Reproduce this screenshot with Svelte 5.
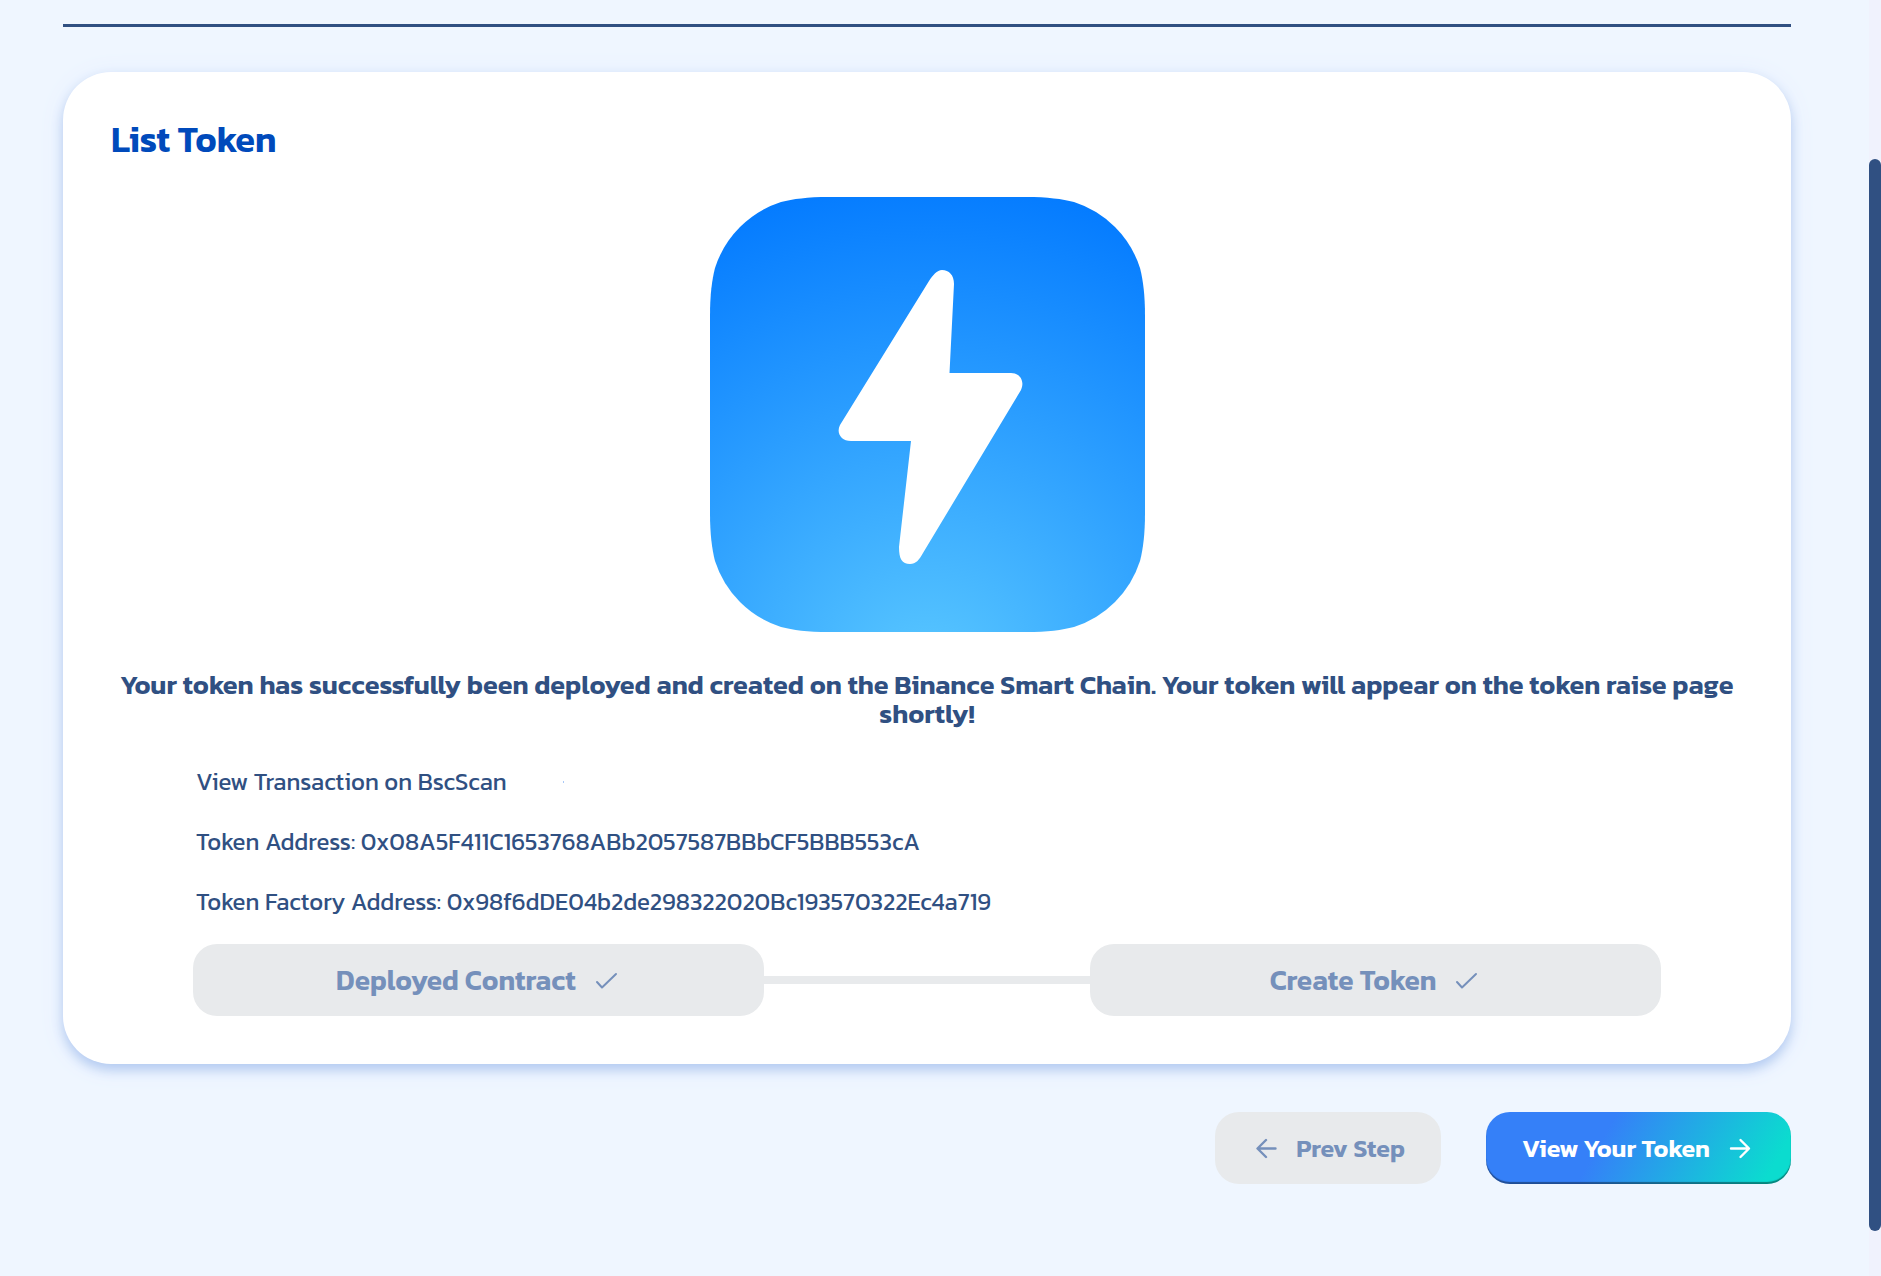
<script>
  const details = [
    { label: 'Token Address', value: '0x08A5F411C1653768ABb2057587BBbCF5BBB553cA' },
    { label: 'Token Factory Address', value: '0x98f6dDE04b2de298322020Bc193570322Ec4a719' }
  ];
</script>

{#snippet check()}
  <svg class="check" viewBox="0 0 27 27" aria-hidden="true"><path d="M3 15 8 20.500 22 7" /></svg>
{/snippet}

<div class="page">
  <main>
    <hr />
    <section class="card">
      <h1>List Token</h1>
      <svg class="logo" viewBox="0 0 435 435" role="img" aria-label="Token logo">
        <defs>
          <radialGradient id="sky" gradientUnits="userSpaceOnUse" cx="217" cy="480" r="500">
            <stop offset="0" stop-color="#5ac8ff" />
            <stop offset="1" stop-color="#047bff" />
          </radialGradient>
        </defs>
        <path
          fill="url(#sky)"
          d="M119 0H316C338 0 352 2 364 5A102 102 0 0 1 430 71C433 83 435 97 435 119V316C435 338 433 352 430 364A102 102 0 0 1 364 430C352 433 338 435 316 435H119C97 435 83 433 71 430A102 102 0 0 1 5 364C2 352 0 338 0 316V119C0 97 2 83 5 71A102 102 0 0 1 71 5C83 2 97 0 119 0Z"
        />
        <path
          fill="#fff"
          d="M244 87C244 78 239 73 232 73C227 73 223 78 219 84L130 228C126 236 131 244 141 244H201L189 350C189 362 192 367 200 367C206 367 209 363 213 356L311 193C315 184 310 176 301 176H239.500Z"
        />
      </svg>
      <p class="message">
        Your token has successfully been deployed and created on the Binance Smart Chain. Your token will appear on the
        token raise page shortly!
      </p>
      <div class="details">
        <p><a href="#transaction">View Transaction on BscScan</a><span class="dot"></span></p>
        {#each details as item}
          <p>{item.label}: {item.value}</p>
        {/each}
      </div>
      <div class="steps">
        <button class="btn muted step" type="button">Deployed Contract {@render check()}</button>
        <span class="connector"></span>
        <button class="btn muted step" type="button">Create Token {@render check()}</button>
      </div>
    </section>
    <nav>
      <button class="btn muted" type="button">
        <svg viewBox="0 0 27 27" aria-hidden="true"><path d="M24.500 13.500H7M15 5 6.500 13.500 15 22" /></svg>
        Prev Step
      </button>
      <button class="btn primary" type="button">
        View Your Token
        <svg viewBox="0 0 27 27" aria-hidden="true"><path d="M3 13.500H20.500M12.500 5 21 13.500 12.500 22" /></svg>
      </button>
    </nav>
  </main>
  <div class="rail"><div class="thumb"></div></div>
</div>

<style>
  :global(body) {
    margin: 0;
    background: #eff6ff;
  }
  .page {
    display: flex;
    min-height: 100vh;
    color: #305082;
    font-family: Kanit, 'Noto Sans', sans-serif;
  }
  main {
    flex: 1;
    min-width: 0;
    padding: 24px 78px 48px 63px;
  }
  hr {
    height: 3px;
    margin: 0 0 45px;
    border: 0;
    background: #305082;
  }
  .card {
    display: flex;
    flex-direction: column;
    padding: 48px;
    border-radius: 48px;
    background: #fff;
    box-shadow:
      0 6px 12px #b4cbf1,
      0 3px 24px #e3ecfc;
  }
  h1 {
    margin: 0 0 38px;
    color: #004abb;
    font-size: 36px;
    font-weight: 600;
    line-height: 39px;
  }
  .logo {
    align-self: center;
    width: 435px;
    max-width: 100%;
  }
  .message {
    margin: 38px 0 36px;
    font-size: 27px;
    font-weight: 600;
    line-height: 29px;
    text-align: center;
  }
  .details {
    display: grid;
    gap: 24px;
    padding: 0 85px;
    font-size: 24px;
    line-height: 36px;
  }
  .details p {
    display: flex;
    align-items: center;
    margin: 0;
    overflow-wrap: anywhere;
  }
  .details a {
    color: inherit;
    text-decoration: none;
  }
  .dot {
    width: 1px;
    height: 2px;
    margin-left: 56px;
    background: #a9c9f8;
  }
  .steps {
    display: flex;
    align-items: center;
    margin-top: 24px;
    padding: 0 82px;
  }
  .connector {
    flex: 4;
    height: 8px;
    background: #e8eaec;
  }
  .btn {
    display: flex;
    align-items: center;
    justify-content: center;
    gap: 18px;
    height: 72px;
    padding: 0 36px;
    border: 0;
    border-radius: 24px;
    font: inherit;
    font-size: 25px;
    font-weight: 600;
    cursor: pointer;
  }
  .btn svg {
    flex: none;
    width: 27px;
    height: 27px;
    fill: none;
    stroke: currentColor;
    stroke-width: 2.400;
    stroke-linecap: round;
    stroke-linejoin: round;
  }
  .btn .check {
    stroke-width: 2;
  }
  .muted {
    background: #e8eaec;
    color: #7590bb;
  }
  .step {
    flex: 7;
    padding: 0;
    font-size: 28px;
  }
  .primary {
    background: linear-gradient(120deg, #3580f8 38%, #0bdccf 92%);
    box-shadow: inset 0 -2px 1px rgb(0 0 0 / 40%);
    color: #fff;
  }
  nav {
    display: flex;
    justify-content: flex-end;
    gap: 45px;
    margin-top: 48px;
  }
  .rail {
    display: flex;
    width: 12px;
    padding: 159px 0 45px;
    box-sizing: border-box;
    background: #f0f2fd;
  }
  .thumb {
    flex: 1;
    border-radius: 6px;
    background: #305082;
  }
</style>
